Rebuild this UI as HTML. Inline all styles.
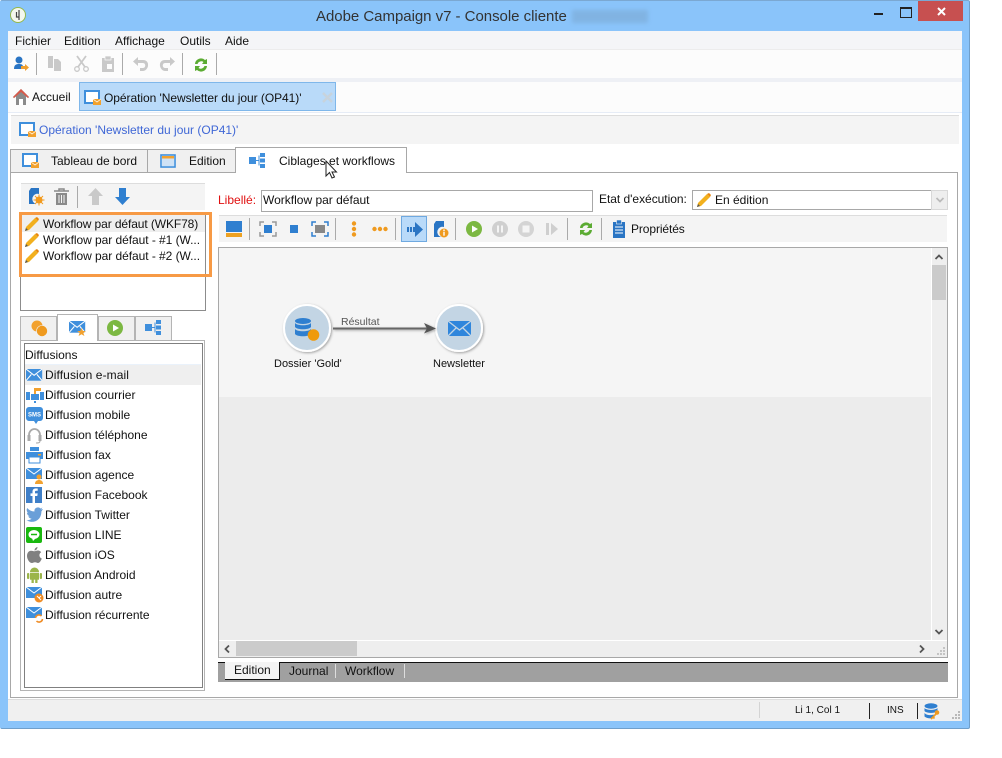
<!DOCTYPE html>
<html><head><meta charset="utf-8"><style>
html,body{margin:0;padding:0;background:#fff}
body{width:1002px;height:758px;position:relative;overflow:hidden;font-family:"Liberation Sans",sans-serif;font-size:12px;color:#111}
.a{position:absolute;box-sizing:border-box}
.t{position:absolute;white-space:nowrap;line-height:14px}
svg{position:absolute;overflow:visible}
</style></head><body>
<svg width="0" height="0" style="position:absolute"><defs>
<g id="pen"><path d="M1 15l1-4 9-9 3 3-9 9z" fill="#f2b01e"/><path d="M11 2l2-1 2 2-1 2z" fill="#e8860c"/><path d="M1 15l1-3 2 2z" fill="#555"/></g>
<g id="mail"><rect width="18" height="13" fill="#3f8fdc"/><path d="M0 0l9 7 9-7M0 13l6-7M18 13l-6-7" fill="none" stroke="#fff" stroke-width="1.2"/></g>
<g id="op"><rect x="1" y="1" width="14" height="12" fill="#fff" stroke="#3f8fdc" stroke-width="2"/><rect x="9" y="9" width="8" height="6" fill="#f2a12e"/><path d="M9 9l4 3 4-3" fill="none" stroke="#fff" stroke-width=".7"/></g>
<g id="wf"><rect x="0" y="4" width="7" height="7" fill="#3f8fdc"/><path d="M7 7.500h3M10 2.500v10" stroke="#3f8fdc"/><rect x="11" y="0" width="5" height="4" fill="#3f8fdc"/><rect x="11" y="5.500" width="5" height="4" fill="#3f8fdc"/><rect x="11" y="11" width="5" height="4" fill="#3f8fdc"/></g>
<g id="sync"><path d="M2 7a6 6 0 0 1 10-4l2-1v5h-5l1.500-2a4 4 0 0 0-6 2zM14 9a6 6 0 0 1-10 4l-2 1v-5h5l-1.500 2a4 4 0 0 0 6-2z" fill="#5bab32"/></g>
</defs></svg>

<!-- window -->
<div class="a" style="left:0;top:0;width:970px;height:729px;background:#8ac4fa;border:1px solid #6f9fcb;border-top-color:#7ba8d2;border-left-color:#8ac4fa;border-radius:2px"></div>
<div class="a" style="left:8px;top:31px;width:954px;height:690px;background:#fff"></div>

<!-- title -->
<svg style="left:10px;top:7px" width="17" height="17"><circle cx="8" cy="8" r="7.500" fill="#f4f7ee" stroke="#94b84a"/><path d="M9 3v10M6.500 5v5H9" stroke="#444" fill="none" stroke-width="1.200"/></svg>
<div class="t" style="left:316px;top:8px;font-size:15px;line-height:17px;color:#333;letter-spacing:-.03px">Adobe Campaign v7 - Console cliente</div>
<div class="a" style="left:572px;top:10px;width:76px;height:13px;background:#7eaedb;filter:blur(2px);opacity:.75"></div>
<div class="a" style="left:874px;top:13px;width:9px;height:2px;background:#222"></div>
<div class="a" style="left:900px;top:7px;width:10px;height:8px;border:1px solid #222;border-top-width:2px;box-sizing:content-box"></div>
<div class="a" style="left:918px;top:1px;width:45px;height:20px;background:#c75050"></div>
<svg style="left:937px;top:7px" width="9" height="9"><path d="M1 1l7 7M8 1l-7 7" stroke="#fff" stroke-width="2"/></svg>

<!-- menu -->
<div class="a" style="left:8px;top:31px;width:954px;height:19px;background:#f4f5f7;border-bottom:1px solid #ececec"></div>
<div class="t" style="left:15px;top:34px">Fichier</div>
<div class="t" style="left:64px;top:34px">Edition</div>
<div class="t" style="left:115px;top:34px">Affichage</div>
<div class="t" style="left:180px;top:34px">Outils</div>
<div class="t" style="left:225px;top:34px">Aide</div>

<!-- toolbar -->
<div class="a" style="left:8px;top:50px;width:954px;height:28px;background:#fcfcfc"></div>
<div class="a" style="left:8px;top:78px;width:954px;height:4px;background:#eef0f5"></div>
<svg style="left:13px;top:56px" width="16" height="16"><circle cx="6" cy="4" r="3.500" fill="#2a75c4"/><path d="M1 13c0-4 2-5 5-5s4 1 4 3v2z" fill="#2a75c4"/><path d="M8 10h4V8l4 3.500-4 3.500v-2H8z" fill="#f0a030"/></svg>
<div class="a" style="left:36px;top:53px;width:1px;height:22px;background:#aaa"></div>
<svg style="left:47px;top:56px" width="16" height="16"><path d="M1 0h5v12H1zM7 3h4l3 3v9H7z" fill="#c9c9c9"/></svg>
<svg style="left:74px;top:56px" width="16" height="16"><path d="M3 0l8 11M12 0L4 11" stroke="#c9c9c9" stroke-width="1.800"/><circle cx="3" cy="13" r="2.300" fill="none" stroke="#c9c9c9" stroke-width="1.300"/><circle cx="12" cy="13" r="2.300" fill="none" stroke="#c9c9c9" stroke-width="1.300"/></svg>
<svg style="left:101px;top:56px" width="14" height="16"><path d="M1 2h12v14H1z" fill="#c9c9c9"/><rect x="4" y="0" width="6" height="4" fill="#c9c9c9" stroke="#fcfcfc" stroke-width=".7"/><rect x="6" y="8" width="5" height="5" fill="#fcfcfc"/></svg>
<div class="a" style="left:122px;top:53px;width:1px;height:22px;background:#aaa"></div>
<svg style="left:133px;top:57px" width="16" height="15"><path d="M5 0v3h5c4 0 5.500 3 5 6-.5 3-3 5-5 5H7v-3h3c3 0 3-5 0-5H5v3L0 4.500z" fill="#c9c9c9"/></svg>
<svg style="left:159px;top:57px" width="16" height="15"><path d="M11 0v3H6C2 3 .5 6 1 9c.5 3 3 5 5 5h3v-3H6c-3 0-3-5 0-5h5v3l5-4.500z" fill="#c9c9c9"/></svg>
<div class="a" style="left:182px;top:53px;width:1px;height:22px;background:#aaa"></div>
<svg style="left:193px;top:57px" width="16" height="16"><use href="#sync"/></svg>
<div class="a" style="left:216px;top:53px;width:1px;height:22px;background:#aaa"></div>

<!-- document tabs -->
<div class="a" style="left:8px;top:82px;width:954px;height:31px;background:#fcfcfc;border-bottom:1px solid #e6ecf6"></div>
<svg style="left:13px;top:89px" width="16" height="16"><path d="M8 0L0 8l1 1 2-1.500V16h10V7.500L15 9l1-1z" fill="#8b8b8b"/><path d="M8 0L0 8l1 1 7-6 7 6 1-1z" fill="#d85a4a"/><rect x="6" y="10" width="4" height="6" fill="#fff"/></svg>
<div class="t" style="left:32px;top:90px">Accueil</div>
<div class="a" style="left:79px;top:82px;width:257px;height:29px;background:#b9daf9;border:1px solid #7fb7ea"></div>
<svg style="left:84px;top:90px" width="18" height="16"><use href="#op"/></svg>
<div class="t" style="left:104px;top:91px;letter-spacing:-.05px">Opération 'Newsletter du jour (OP41)'</div>
<svg style="left:322px;top:92px" width="11" height="11"><path d="M1 1l9 9M10 1l-9 9" stroke="#c8d3dc" stroke-width="2.400"/></svg>

<!-- header -->
<div class="a" style="left:11px;top:115px;width:948px;height:29px;background:#f4f4f4;border-top:1px solid #ddd"></div>
<svg style="left:19px;top:122px" width="18" height="16"><use href="#op"/></svg>
<div class="t" style="left:39px;top:123px;color:#3f67d6">Opération 'Newsletter du jour (OP41)'</div>

<!-- main panel -->
<div class="a" style="left:10px;top:172px;width:948px;height:526px;background:#fff;border:1px solid #a8a8a8"></div>
<div class="a" style="left:10px;top:149px;width:138px;height:24px;background:#f0f0f0;border:1px solid #a8a8a8"></div>
<div class="a" style="left:148px;top:149px;width:88px;height:24px;background:#f0f0f0;border:1px solid #a8a8a8;border-left:0"></div>
<div class="a" style="left:235px;top:147px;width:172px;height:26px;background:#fff;border:1px solid #a8a8a8;border-bottom:0"></div>
<svg style="left:22px;top:153px" width="18" height="16"><use href="#op"/></svg>
<div class="t" style="left:51px;top:154px">Tableau de bord</div>
<svg style="left:160px;top:154px" width="16" height="14"><rect x="1" y="1" width="14" height="12" fill="#fff" stroke="#3f8fdc" stroke-width="1.600"/><rect x="2" y="2" width="12" height="2.500" fill="#f2a12e"/><rect x="2" y="4.500" width="12" height="7.500" fill="#cfe2f5"/></svg>
<div class="t" style="left:189px;top:154px">Edition</div>
<svg style="left:249px;top:153px" width="16" height="15"><use href="#wf"/></svg>
<div class="t" style="left:279px;top:154px">Ciblages et workflows</div>
<svg style="left:325px;top:161px" width="12" height="19"><path d="M1 0v15l3.500-3.500L7 17l2.500-1-2.500-5h4.500z" fill="#fff" stroke="#222" stroke-width="1"/></svg>

<!-- left toolbar -->
<div class="a" style="left:21px;top:183px;width:184px;height:27px;background:#f4f4f4;border-top:1px solid #ddd"></div>
<svg style="left:28px;top:188px" width="16" height="17"><path d="M3 0h8v6a5 5 0 0 0-3 10H1V3z" fill="#2a75c4"/><circle cx="11" cy="12" r="3.500" fill="#f29a1e"/><path d="M11 6.500v11M5.500 12h11M7 8l8 8M15 8l-8 8" stroke="#f29a1e"/><circle cx="11" cy="12" r="2" fill="#f29a1e"/></svg>
<svg style="left:54px;top:188px" width="15" height="17"><path d="M0 3h15M5 3V1h5v2" stroke="#8a8a8a" stroke-width="1.500" fill="none"/><path d="M2 5h11v12H2z" fill="#8a8a8a"/><path d="M5 7v8M7.500 7v8M10 7v8" stroke="#f4f4f4"/></svg>
<div class="a" style="left:77px;top:186px;width:1px;height:22px;background:#aaa"></div>
<svg style="left:88px;top:188px" width="15" height="17"><path d="M7.500 0L15 8h-4v9H4V8H0z" fill="#c9c9c9"/></svg>
<svg style="left:115px;top:188px" width="15" height="17"><path d="M7.500 17L15 9h-4V0H4v9H0z" fill="#2f7fd0"/></svg>

<!-- workflow list -->
<div class="a" style="left:20px;top:214px;width:186px;height:97px;background:#fff;border:1px solid #8c8c8c"></div>
<div class="a" style="left:21px;top:215px;width:184px;height:17px;background:#efefef"></div>
<svg style="left:24px;top:216px" width="16" height="16"><use href="#pen"/></svg>
<svg style="left:24px;top:232px" width="16" height="16"><use href="#pen"/></svg>
<svg style="left:24px;top:248px" width="16" height="16"><use href="#pen"/></svg>
<div class="t" style="left:43px;top:217px;letter-spacing:-.1px">Workflow par défaut (WKF78)</div>
<div class="t" style="left:43px;top:233px;letter-spacing:-.05px">Workflow par défaut - #1 (W...</div>
<div class="t" style="left:43px;top:249px;letter-spacing:-.05px">Workflow par défaut - #2 (W...</div>
<div class="a" style="left:19px;top:212px;width:193px;height:65px;border:3px solid #f79a45"></div>

<!-- left tabs -->
<div class="a" style="left:20px;top:340px;width:185px;height:351px;background:#fff;border:1px solid #b4b4b4"></div>
<div class="a" style="left:20px;top:316px;width:37px;height:25px;background:#f0f0f0;border:1px solid #b4b4b4"></div>
<div class="a" style="left:57px;top:314px;width:41px;height:27px;background:#fff;border:1px solid #b4b4b4;border-bottom:0"></div>
<div class="a" style="left:98px;top:316px;width:37px;height:25px;background:#f0f0f0;border:1px solid #b4b4b4"></div>
<div class="a" style="left:135px;top:316px;width:37px;height:25px;background:#f0f0f0;border:1px solid #b4b4b4"></div>
<svg style="left:31px;top:320px" width="17" height="17"><circle cx="6" cy="6" r="5.500" fill="#f2a12e"/><circle cx="11" cy="11" r="5.500" fill="#ef9a1f" stroke="#f0f0f0" stroke-width=".6"/></svg>
<svg style="left:69px;top:321px" width="18" height="15"><g transform="scale(.9)"><use href="#mail"/></g><path d="M12.500 7l1.300 3h3l-2.400 2 1 3-2.900-1.800L9.600 15l1-3-2.400-2h3z" fill="#f2a12e"/></svg>
<svg style="left:107px;top:320px" width="17" height="17"><circle cx="8" cy="8" r="8" fill="#7cb842"/><path d="M6 4.500v7l6-3.500z" fill="#fff"/></svg>
<svg style="left:145px;top:320px" width="16" height="15"><use href="#wf"/></svg>

<!-- diffusions -->
<div class="a" style="left:24px;top:343px;width:179px;height:345px;background:#fff;border:1px solid #808080"></div>
<div class="t" style="left:25px;top:348px">Diffusions</div>
<div class="a" style="left:25px;top:364px;width:176px;height:1px;background:#eaf2fb"></div>
<div class="a" style="left:25px;top:365px;width:176px;height:20px;background:#efefef"></div>

<svg style="left:26px;top:369px" width="16" height="12"><g transform="scale(.9)"><use href="#mail"/></g></svg>
<svg style="left:26px;top:388px" width="18" height="16"><rect x="0" y="4" width="4" height="8" fill="#3f8fdc"/><rect x="5" y="6" width="8" height="6" fill="#3f8fdc"/><rect x="14" y="4" width="4" height="8" fill="#3f8fdc"/><rect x="8" y="0" width="2" height="6" fill="#f2a12e"/><rect x="8" y="0" width="7" height="3" fill="#f2a12e"/><rect x="8" y="13" width="2" height="2" fill="#3f8fdc"/></svg>
<svg style="left:26px;top:407px" width="17" height="17"><path d="M3 0h11a3 3 0 0 1 3 3v8a3 3 0 0 1-3 3h-2l-2 3-2-3H3a3 3 0 0 1-3-3V3a3 3 0 0 1 3-3z" fill="#3f8fdc"/><text x="8.500" y="9.500" font-size="6" font-weight="bold" fill="#fff" text-anchor="middle" font-family="Liberation Sans">SMS</text></svg>
<svg style="left:26px;top:427px" width="17" height="17"><path d="M3 13V8a5.500 6 0 0 1 11 0v5" fill="none" stroke="#aaa" stroke-width="1.800"/><rect x="1.500" y="8" width="3" height="6" fill="#aaa"/><rect x="12.500" y="8" width="3" height="6" fill="#aaa"/><path d="M14 14c0 2-2 2-4 2" fill="none" stroke="#aaa"/></svg>
<svg style="left:26px;top:447px" width="17" height="16"><rect x="4" y="0" width="9" height="4" fill="#3f8fdc"/><rect x="0" y="5" width="17" height="7" fill="#3f8fdc"/><rect x="3" y="10" width="11" height="6" fill="#fff" stroke="#3f8fdc"/><rect x="12" y="7" width="3" height="1.500" fill="#f2a12e"/></svg>
<svg style="left:26px;top:468px" width="18" height="16"><rect width="16" height="11" fill="#3f8fdc"/><path d="M0 0l8 6 8-6" fill="none" stroke="#fff"/><circle cx="13" cy="9" r="2.500" fill="#f2a12e"/><path d="M9 16c0-3 2-4 4-4s4 1 4 4z" fill="#f2a12e"/></svg>
<svg style="left:26px;top:487px" width="16" height="16"><rect width="16" height="16" fill="#3f7fc8"/><path d="M9 16V9h2.300l.4-2.600H9V5c0-.8.3-1.200 1.300-1.200h1.400V1.500H9.800C7.500 1.500 6.500 2.800 6.500 4.700v1.700H4.500V9h2v7z" fill="#fff"/></svg>
<svg style="left:26px;top:507px" width="17" height="15"><path d="M17 2l-2 .5 1.500-2-2 1A3.500 3.500 0 0 0 8.500 4.500C5.500 4.400 3 3 1.200 1c-1 1.800-.5 3.800 1 5L1 5.600c0 1.800 1.200 3.200 2.800 3.600l-1.500.1c.5 1.500 1.800 2.400 3.300 2.500-1.500 1.100-3.300 1.700-5.200 1.500 6 3.700 15 .8 15-8.800z" fill="#6a9fd8"/></svg>
<svg style="left:26px;top:527px" width="16" height="16"><rect width="16" height="16" rx="2" fill="#19b80f"/><ellipse cx="8" cy="7.500" rx="5.500" ry="4.500" fill="#fff"/><path d="M6 11l1 3 3-3z" fill="#fff"/><path d="M5 7.500h6" stroke="#19b80f" stroke-width="1.500"/></svg>
<svg style="left:27px;top:547px" width="15" height="16"><path d="M10.500 0c0 2-1.500 3.500-3 3.500C7.500 1.700 9 .3 10.500 0zM7.500 4.300c1 0 2-.8 3.500-.8 1.300 0 2.500.7 3.200 1.800-2.700 1.500-2.200 5.300.6 6.300-.8 2-2.200 4.400-3.800 4.400-1 0-1.600-.7-3-.7s-2 .7-3 .7C2.300 16 0 12 0 9c0-3.300 2-5.300 4-5.300 1.500 0 2.500.6 3.500.6z" fill="#808080"/></svg>
<svg style="left:27px;top:566px" width="15" height="17"><path d="M3 6a4.500 4.500 0 0 1 9 0z" fill="#9bb54a"/><rect x="3" y="6.700" width="9" height="7" fill="#9bb54a"/><rect x="0" y="7" width="2.300" height="6" rx="1" fill="#9bb54a"/><rect x="12.700" y="7" width="2.300" height="6" rx="1" fill="#9bb54a"/><rect x="4.500" y="13" width="2.300" height="4" fill="#9bb54a"/><rect x="8.200" y="13" width="2.300" height="4" fill="#9bb54a"/></svg>
<svg style="left:26px;top:587px" width="18" height="16"><rect width="16" height="11" fill="#3f8fdc"/><path d="M0 0l8 6 8-6" fill="none" stroke="#fff"/><circle cx="13" cy="11" r="4.500" fill="#ef8c24"/><path d="M11 9l4 4M15 9l-2 2" stroke="#fff"/></svg>
<svg style="left:26px;top:607px" width="18" height="16"><rect width="16" height="11" fill="#3f8fdc"/><path d="M0 0l8 6 8-6" fill="none" stroke="#fff"/><circle cx="13" cy="11.500" r="4" fill="#fff"/><path d="M9.500 11a3.500 3.500 0 0 1 6-2M16.500 12a3.500 3.500 0 0 1-6 2" fill="none" stroke="#ef8c24" stroke-width="1.600"/></svg>

<div class="t" style="left:45px;top:368px;letter-spacing:.1px">Diffusion e-mail</div>
<div class="t" style="left:45px;top:388px">Diffusion courrier</div>
<div class="t" style="left:45px;top:408px">Diffusion mobile</div>
<div class="t" style="left:45px;top:428px">Diffusion téléphone</div>
<div class="t" style="left:45px;top:448px">Diffusion fax</div>
<div class="t" style="left:45px;top:468px">Diffusion agence</div>
<div class="t" style="left:45px;top:488px">Diffusion Facebook</div>
<div class="t" style="left:45px;top:508px">Diffusion Twitter</div>
<div class="t" style="left:45px;top:528px">Diffusion LINE</div>
<div class="t" style="left:45px;top:548px">Diffusion iOS</div>
<div class="t" style="left:45px;top:568px">Diffusion Android</div>
<div class="t" style="left:45px;top:588px">Diffusion autre</div>
<div class="t" style="left:45px;top:608px">Diffusion récurrente</div>

<!-- form -->
<div class="t" style="left:218px;top:193px;color:#e01010">Libellé:</div>
<div class="a" style="left:261px;top:190px;width:332px;height:22px;background:#fff;border:1px solid #a8a8a8"></div>
<div class="t" style="left:263px;top:193px">Workflow par défaut</div>
<div class="t" style="left:599px;top:192px;letter-spacing:-.03px">Etat d'exécution:</div>
<div class="a" style="left:692px;top:190px;width:240px;height:20px;background:#fff;border:1px solid #a8a8a8"></div>
<svg style="left:696px;top:192px" width="16" height="16"><use href="#pen"/></svg>
<div class="t" style="left:715px;top:193px">En édition</div>
<div class="a" style="left:931px;top:190px;width:17px;height:20px;background:#eee;border:1px solid #d8d8d8"></div>
<svg style="left:936px;top:197px" width="8" height="6"><path d="M.5 1L4 4.500 7.500 1" fill="none" stroke="#bbb" stroke-width="1.800"/></svg>

<!-- wf toolbar -->
<div class="a" style="left:219px;top:215px;width:728px;height:27px;background:#f4f4f4;border-top:1px solid #ddd"></div>
<div class="a" style="left:226px;top:221px;width:16px;height:11px;background:#2f7fd0"></div>
<div class="a" style="left:226px;top:233px;width:16px;height:4px;background:#eda122"></div>
<div class="a" style="left:249px;top:218px;width:1px;height:22px;background:#aaa"></div>
<svg style="left:260px;top:222px" width="16" height="14"><rect x="4" y="3" width="8" height="8" fill="#2f7fd0"/><path d="M0 4V0h4M12 0h4v4M16 10v4h-4M4 14H0v-4" fill="none" stroke="#999" stroke-width="1.500"/></svg>
<div class="a" style="left:290px;top:225px;width:8px;height:8px;background:#2f7fd0"></div>
<svg style="left:312px;top:222px" width="16" height="14"><rect x="3" y="3" width="10" height="8" fill="#888"/><path d="M0 4V0h4M12 0h4v4M16 10v4h-4M4 14H0v-4" fill="none" stroke="#2f7fd0" stroke-width="1.500"/></svg>
<div class="a" style="left:335px;top:218px;width:1px;height:22px;background:#aaa"></div>
<svg style="left:351px;top:221px" width="6" height="16"><circle cx="3" cy="2.500" r="2.200" fill="#ef9a1f"/><circle cx="3" cy="8" r="2.200" fill="#ef9a1f"/><circle cx="3" cy="13.500" r="2.200" fill="#ef9a1f"/></svg>
<svg style="left:372px;top:226px" width="16" height="6"><circle cx="2.500" cy="3" r="2.200" fill="#ef9a1f"/><circle cx="8" cy="3" r="2.200" fill="#ef9a1f"/><circle cx="13.500" cy="3" r="2.200" fill="#ef9a1f"/></svg>
<div class="a" style="left:395px;top:218px;width:1px;height:22px;background:#aaa"></div>
<div class="a" style="left:401px;top:216px;width:26px;height:26px;background:#b9daf9;border:1px solid #6fa9e0"></div>
<svg style="left:407px;top:222px" width="16" height="15"><path d="M0 5h2v5H0zM3 5h2v5H3zM6 5h2V0l8 7.500L8 15v-5H6z" fill="#2a75c4"/></svg>
<svg style="left:433px;top:221px" width="16" height="17"><path d="M3 0h8v6a5 5 0 0 0-3 10H1V3z" fill="#2a75c4"/><circle cx="11" cy="12" r="4.500" fill="#ef9a1f"/><rect x="10.300" y="8.500" width="1.400" height="1.500" fill="#fff"/><rect x="10.300" y="10.700" width="1.400" height="4" fill="#fff"/></svg>
<div class="a" style="left:455px;top:218px;width:1px;height:22px;background:#aaa"></div>
<svg style="left:466px;top:221px" width="16" height="16"><circle cx="8" cy="8" r="8" fill="#7cb842"/><path d="M6 4.500v7l6-3.500z" fill="#fff"/></svg>
<svg style="left:492px;top:221px" width="16" height="16"><circle cx="8" cy="8" r="8" fill="#cfcfcf"/><path d="M5 4.500h2v7H5zM9 4.500h2v7H9z" fill="#f4f4f4"/></svg>
<svg style="left:518px;top:221px" width="16" height="16"><circle cx="8" cy="8" r="8" fill="#d4d4d4"/><rect x="4.500" y="4.500" width="7" height="7" fill="#f4f4f4"/></svg>
<svg style="left:546px;top:222px" width="13" height="14"><rect x="0" y="1" width="3" height="12" fill="#cfcfcf"/><path d="M5 1v12l7-6z" fill="#cfcfcf"/></svg>
<div class="a" style="left:567px;top:218px;width:1px;height:22px;background:#aaa"></div>
<svg style="left:578px;top:221px" width="16" height="16"><use href="#sync"/></svg>
<div class="a" style="left:601px;top:218px;width:1px;height:22px;background:#aaa"></div>
<svg style="left:613px;top:220px" width="12" height="18"><rect y="2" width="12" height="16" fill="#2a75c4"/><rect x="3.500" y="0" width="5" height="4" fill="#2a75c4" stroke="#f4f4f4" stroke-width=".6"/><path d="M2 7h8M2 10h8M2 13h8" stroke="#fff"/></svg>
<div class="t" style="left:631px;top:222px;letter-spacing:-.1px">Propriétés</div>

<!-- canvas -->
<div class="a" style="left:218px;top:247px;width:730px;height:411px;background:#ececec;border:1px solid #a8a8a8"></div>
<div class="a" style="left:219px;top:248px;width:712px;height:149px;background:#f5f5f5"></div>
<div class="a" style="left:931px;top:248px;width:16px;height:409px;background:#eee"></div>
<div class="a" style="left:931px;top:265px;width:15px;height:35px;background:#cbcbcb"></div>
<div class="a" style="left:219px;top:640px;width:728px;height:17px;background:#eee;border-top:1px solid #fff"></div>
<div class="a" style="left:931px;top:248px;width:1px;height:392px;background:#fff"></div>
<svg style="left:935px;top:254px" width="8" height="6"><path d="M.5 5L4 1.500 7.500 5" fill="none" stroke="#555" stroke-width="1.800"/></svg>
<svg style="left:935px;top:629px" width="8" height="6"><path d="M.5 1L4 4.500 7.500 1" fill="none" stroke="#555" stroke-width="1.800"/></svg>
<svg style="left:224px;top:645px" width="6" height="8"><path d="M5 .5L1.500 4 5 7.500" fill="none" stroke="#555" stroke-width="1.800"/></svg>
<svg style="left:919px;top:645px" width="6" height="8"><path d="M1 .5L4.500 4 1 7.500" fill="none" stroke="#555" stroke-width="1.800"/></svg>
<div class="a" style="left:236px;top:641px;width:121px;height:15px;background:#cbcbcb"></div>

<!-- workflow nodes -->
<svg style="left:270px;top:299px" width="220" height="60">
<defs><filter id="s" x="-20%" y="-20%" width="150%" height="150%"><feDropShadow dx="1" dy="1" stdDeviation="1.200" flood-color="#000" flood-opacity=".35"/></filter></defs>
<circle cx="37" cy="29" r="23" fill="#c3d5e4" stroke="#fff" stroke-width="2" filter="url(#s)"/>
<circle cx="189" cy="29" r="23" fill="#c3d5e4" stroke="#fff" stroke-width="2" filter="url(#s)"/>
<g filter="url(#s)"><path d="M63 29.500h98" stroke="#666" stroke-width="2"/>
<path d="M154 24l12 5.500-12 5 3-5z" fill="#555"/></g>
<g transform="translate(-4 0)"><ellipse cx="37" cy="22" rx="8" ry="3" fill="#2f7fd0"/><path d="M29 24c2 3 14 3 16 0v4c-2 3-14 3-16 0zM29 30c2 3 14 3 16 0v5c-2 3-14 3-16 0z" fill="#2f7fd0"/></g>
<circle cx="43.500" cy="36" r="5.800" fill="#ef9a0c"/>
<rect x="178" y="22" width="23" height="15" fill="#2f86dc"/><path d="M178 22l11.500 9 11.500-9M178 37l8-8M201 37l-8-8" fill="none" stroke="#c3d5e4" stroke-width="1.300"/>
</svg>
<div class="t" style="left:341px;top:315px;font-size:10.500px;color:#555">Résultat</div>
<div class="t" style="left:274px;top:357px;font-size:11px">Dossier 'Gold'</div>
<div class="t" style="left:433px;top:357px;font-size:11px">Newsletter</div>
<svg style="left:937px;top:647px" width="9" height="9"><g fill="#c4c4c4"><rect x="6" y="0" width="2" height="2"/><rect x="3" y="3" width="2" height="2"/><rect x="6" y="3" width="2" height="2"/><rect x="0" y="6" width="2" height="2"/><rect x="3" y="6" width="2" height="2"/><rect x="6" y="6" width="2" height="2"/></g></svg>

<!-- bottom tabs -->
<div class="a" style="left:218px;top:662px;width:730px;height:20px;background:#a0a0a0;border-top:1px solid #111"></div>
<div class="a" style="left:225px;top:662px;width:55px;height:18px;background:#f4f4f4;border-right:1px solid #111;border-bottom:1px solid #111"></div>
<div class="t" style="left:234px;top:663px">Edition</div>
<div class="t" style="left:289px;top:664px">Journal</div>
<div class="a" style="left:335px;top:664px;width:1px;height:14px;background:#ddd"></div>
<div class="t" style="left:345px;top:664px">Workflow</div>
<div class="a" style="left:404px;top:664px;width:1px;height:14px;background:#ddd"></div>

<!-- status -->
<div class="a" style="left:8px;top:699px;width:954px;height:22px;background:#f0f0f0;border-top:1px solid #ddd"></div>
<div class="a" style="left:759px;top:702px;width:1px;height:16px;background:#d4d4d4"></div>
<div class="t" style="left:795px;top:704px;font-size:10px">Li 1, Col 1</div>
<div class="a" style="left:869px;top:703px;width:1px;height:16px;background:#222"></div>
<div class="t" style="left:887px;top:704px;font-size:10px">INS</div>
<div class="a" style="left:917px;top:703px;width:1px;height:16px;background:#222"></div>
<svg style="left:924px;top:703px" width="17" height="18"><ellipse cx="7" cy="3" rx="6.500" ry="2.700" fill="#2f7fd0"/><path d="M.5 5c2 2.500 11 2.500 13 0v3c-2 2.500-11 2.500-13 0zM.5 10c2 2.500 7 2.500 9 1.500l1 3c-3 1.500-8 1-10-1z" fill="#2f7fd0"/><circle cx="13" cy="9.500" r="2.300" fill="#ef9a1f"/><path d="M12 11l-5 5M9 14l1.500 1.500" stroke="#ef9a1f" stroke-width="1.600"/></svg>
<svg style="left:952px;top:711px" width="9" height="9"><g fill="#b8b8b8"><rect x="6" y="0" width="2" height="2"/><rect x="3" y="3" width="2" height="2"/><rect x="6" y="3" width="2" height="2"/><rect x="0" y="6" width="2" height="2"/><rect x="3" y="6" width="2" height="2"/><rect x="6" y="6" width="2" height="2"/></g></svg>
</body></html>
